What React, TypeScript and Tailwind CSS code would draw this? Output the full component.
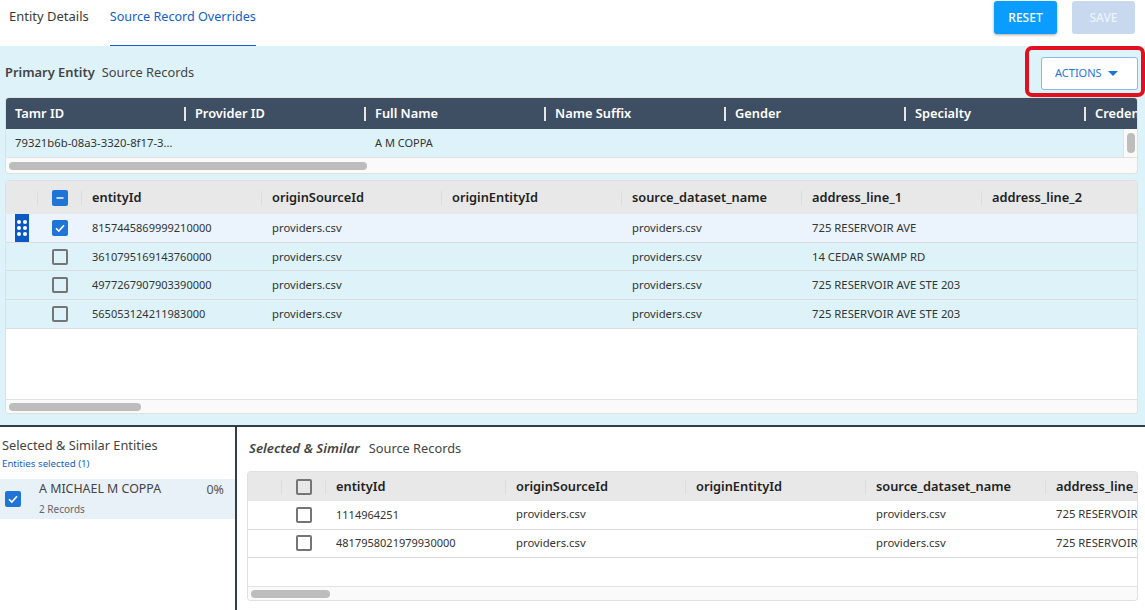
const primaryColumns = ['Tamr ID', 'Provider ID', 'Full Name', 'Name Suffix', 'Gender', 'Specialty', 'Credentials'];
const recordColumns = ['entityId', 'originSourceId', 'originEntityId', 'source_dataset_name', 'address_line_1', 'address_line_2'];

const sourceRows = [
  { id: '8157445869999210000', dataset: 'providers.csv', address: '725 RESERVOIR AVE', checked: true },
  { id: '3610795169143760000', dataset: 'providers.csv', address: '14 CEDAR SWAMP RD', checked: false },
  { id: '4977267907903390000', dataset: 'providers.csv', address: '725 RESERVOIR AVE STE 203', checked: false },
  { id: '565053124211983000', dataset: 'providers.csv', address: '725 RESERVOIR AVE STE 203', checked: false },
];

const similarRows = [
  { id: '1114964251', dataset: 'providers.csv', address: '725 RESERVOIR' },
  { id: '4817958021979930000', dataset: 'providers.csv', address: '725 RESERVOIR' },
];

function Checkbox({ state }: { state: 'on' | 'off' | 'mixed' }) {
  if (state === 'off') {
    return <span className="block w-4 h-4 shrink-0 rounded-[2px] border-2 border-[#757575]" />;
  }
  return (
    <span className="flex items-center justify-center w-4 h-4 shrink-0 rounded-[2px] bg-[#1f74d8]">
      <svg width="12" height="12" viewBox="0 0 12 12" fill="none" stroke="white" strokeWidth="1.6">
        {state === 'on' ? <path d="M2 6.2 4.8 9 10 3.2" /> : <path d="M2.5 6h7" />}
      </svg>
    </span>
  );
}

function DragHandle() {
  return (
    <span className="grid grid-cols-[4px_4px] gap-x-[2px] gap-y-[2px] content-center justify-center w-[14px] h-full bg-[#0b57c4]">
      {[0, 1, 2, 3, 4, 5].map((dot) => (
        <span key={dot} className="w-1 h-1 rounded-full bg-white" />
      ))}
    </span>
  );
}

function Scrollbar({ thumb }: { thumb: string }) {
  return (
    <div className="h-[14px] shrink-0 flex items-center pl-[3px] bg-[#fafafa] border-t border-[#e3e3e3]">
      <div className={`h-2 rounded bg-[#bdbdbd] ${thumb}`} />
    </div>
  );
}

function RecordHeader({ checkbox, height, lead }: { checkbox: 'off' | 'mixed'; height: string; lead: string }) {
  return (
    <div className={`flex items-center shrink-0 bg-[#e8e8e8] text-[12.8px] font-semibold text-[#222] ${height}`}>
      <div className={`h-[14px] shrink-0 border-r border-[#dcdcdc] ${lead}`} />
      <div className="w-[44px] h-[14px] shrink-0 flex items-center justify-center border-r border-[#dcdcdc]">
        <Checkbox state={checkbox} />
      </div>
      {recordColumns.map((name, i) => (
        <div key={name} className={`w-[180px] shrink-0 h-[14px] flex items-center pl-[10px] whitespace-nowrap ${i < 5 ? 'border-r border-[#dcdcdc]' : ''}`}>
          {name}
        </div>
      ))}
    </div>
  );
}

export default function App() {
  return (
    <div className="relative w-full h-[610px] overflow-hidden flex flex-col bg-white font-['Noto_Sans',sans-serif] text-[#3b3b3b]">
      {/* Top bar */}
      <div className="h-[46px] shrink-0 flex justify-between pl-[9px] pr-[10px]">
        <div className="flex gap-[21px] text-[13px]">
          <div className="pt-[7px]">Entity Details</div>
          <div className="pt-[7px] h-[46px] border-b border-[#1360c8] text-[12.6px] leading-[20px] text-[#1360c8]">Source Record Overrides</div>
        </div>
        <div className="flex gap-[15px] pt-[1px]">
          <button className="w-[63px] h-[33px] rounded-[3px] bg-[#0a9cff] text-white text-[12px] font-medium shadow-[0_1px_3px_rgba(0,0,0,0.35)]">RESET</button>
          <button className="w-[63px] h-[33px] rounded-[3px] bg-[#c8d8ee] text-[#eef3fa] text-[12px] font-medium">SAVE</button>
        </div>
      </div>

      {/* Primary entity */}
      <div className="h-[379px] shrink-0 bg-[#def3f9] flex flex-col">
        <div className="h-[52px] shrink-0 flex items-center justify-between pl-[5px] pr-[7px]">
          <div className="flex items-baseline gap-[7px] mt-[2px]">
            <span className="text-[12.9px] font-semibold text-[#444]">Primary Entity</span>
            <span className="text-[12.8px] text-[#444]">Source Records</span>
          </div>
          <button className="w-[97px] h-[33px] mt-[2px] flex items-center gap-[6px] pl-[13px] rounded-[3px] border border-[#8ab8ee] bg-white text-[11px] text-[#1f74d8]">
            ACTIONS
            <svg width="10" height="5" viewBox="0 0 10 5"><path d="M0 0h10L5 5z" fill="#1f74d8" /></svg>
          </button>
        </div>

        <div className="ml-[6px] mr-[8px] h-[75px] shrink-0 overflow-hidden rounded-[3px] bg-[#fafafa] shadow-[0_0_0_1px_#e0e0e0] flex flex-col">
          <div className="h-[31px] shrink-0 flex items-center bg-[#3f4f63] text-[12.8px] font-semibold text-white">
            {primaryColumns.map((name, i) => (
              <div key={name} className={`w-[180px] shrink-0 h-[14px] flex items-center pl-[9px] whitespace-nowrap ${i < 6 ? 'border-r-2 border-[#e6e6e6]' : ''}`}>
                {name}
              </div>
            ))}
          </div>
          <div className="h-[29px] shrink-0 flex">
            <div className="flex-1 flex items-center bg-[#def3f9] border-b border-[#e3e3e3] text-[11px] text-[#333]">
              <div className="w-[180px] pl-[9px] text-[11.3px]">79321b6b-08a3-3320-8f17-3…</div>
              <div className="w-[180px]" />
              <div className="pl-[9px]">A M COPPA</div>
            </div>
            <div className="w-[14px] bg-[#fafafa] border-l border-b border-[#e3e3e3] flex justify-center pt-1">
              <div className="w-2 h-5 rounded bg-[#bdbdbd]" />
            </div>
          </div>
          <div className="flex-1 flex items-center pl-[3px]">
            <div className="h-2 w-[358px] rounded bg-[#bdbdbd]" />
          </div>
        </div>

        <div className="ml-[6px] mr-[8px] mt-[8px] h-[232px] shrink-0 overflow-hidden rounded-[3px] bg-white shadow-[0_0_0_1px_#e0e0e0] flex flex-col">
          <RecordHeader checkbox="mixed" height="h-[33px]" lead="w-8" />
          {sourceRows.map((row) => (
            <div key={row.id} className={`h-[28.7px] shrink-0 flex items-center border-b border-[#dcdcdc] text-[11.3px] text-[#333] ${row.checked ? 'bg-[#ebf3fc]' : 'bg-[#def3f9]'}`}>
              <div className="w-[32px] h-full shrink-0 pl-[9px]">{row.checked && <DragHandle />}</div>
              <div className="w-[44px] shrink-0 flex justify-center"><Checkbox state={row.checked ? 'on' : 'off'} /></div>
              <div className="w-[180px] shrink-0 pl-[10px] pt-px text-[11px]">{row.id}</div>
              <div className="w-[180px] shrink-0 pl-[10px] pt-px">{row.dataset}</div>
              <div className="w-[180px] shrink-0" />
              <div className="w-[180px] shrink-0 pl-[10px] pt-px">{row.dataset}</div>
              <div className="w-[180px] shrink-0 pl-[10px] pt-px whitespace-nowrap">{row.address}</div>
            </div>
          ))}
          <div className="flex-1" />
          <Scrollbar thumb="w-[132px]" />
        </div>
      </div>

      {/* Selected and similar */}
      <div className="flex-1 min-h-0 flex border-t-2 border-[#2c3e50]">
        <div className="w-[235px] shrink-0 flex flex-col">
          <div className="pl-[2px] pt-[9px] text-[12.8px] text-[#444]">Selected &amp; Similar Entities</div>
          <div className="pl-[2px] mt-[2px] text-[9.7px] text-[#1360c8]">Entities selected (1)</div>
          <div className="mt-[7px] h-10 flex items-center bg-[#e8f0f8] pl-[5px] pr-[11px]">
            <Checkbox state="on" />
            <div className="flex-1 pl-[18px]">
              <div className="text-[12.4px] leading-[20px] text-[#444]">A MICHAEL M COPPA</div>
              <div className="text-[10px] leading-[20px] text-[#666]">2 Records</div>
            </div>
            <div className="self-start pt-[1px] text-[12.5px] leading-[20px] text-[#555]">0%</div>
          </div>
        </div>

        <div className="flex-1 min-w-0 flex flex-col border-l-2 border-[#2c3e50] pl-[11px] pr-[8px]">
          <div className="h-[45px] shrink-0 flex items-center gap-[9px] pl-[1px] pb-[1px]">
            <span className="text-[13.3px] font-semibold italic text-[#444]">Selected &amp; Similar</span>
            <span className="text-[12.8px] text-[#444]">Source Records</span>
          </div>
          <div className="h-[128px] shrink-0 overflow-hidden rounded-[3px] bg-white shadow-[0_0_0_1px_#e0e0e0] flex flex-col">
            <RecordHeader checkbox="off" height="h-[29px]" lead="w-[34px]" />
            {similarRows.map((row) => (
              <div key={row.id} className="h-[28.5px] shrink-0 flex items-center border-b border-[#dcdcdc] text-[11.3px] text-[#333]">
                <div className="w-[34px] shrink-0" />
                <div className="w-[44px] shrink-0 flex justify-center"><Checkbox state="off" /></div>
                <div className="w-[180px] shrink-0 pl-[10px] text-[11px]">{row.id}</div>
                <div className="w-[180px] shrink-0 pl-[10px]">{row.dataset}</div>
                <div className="w-[180px] shrink-0" />
                <div className="w-[180px] shrink-0 pl-[10px]">{row.dataset}</div>
                <div className="w-[180px] shrink-0 pl-[10px] whitespace-nowrap">{row.address}</div>
              </div>
            ))}
            <div className="flex-1" />
            <Scrollbar thumb="w-[79px]" />
          </div>
        </div>
      </div>

      {/* Red callout over the actions button */}
      <div className="absolute left-[1025px] top-[46px] w-[120px] h-[51px] rounded-[7px] border-[4px] border-[#e01020] pointer-events-none" />
    </div>
  );
}
